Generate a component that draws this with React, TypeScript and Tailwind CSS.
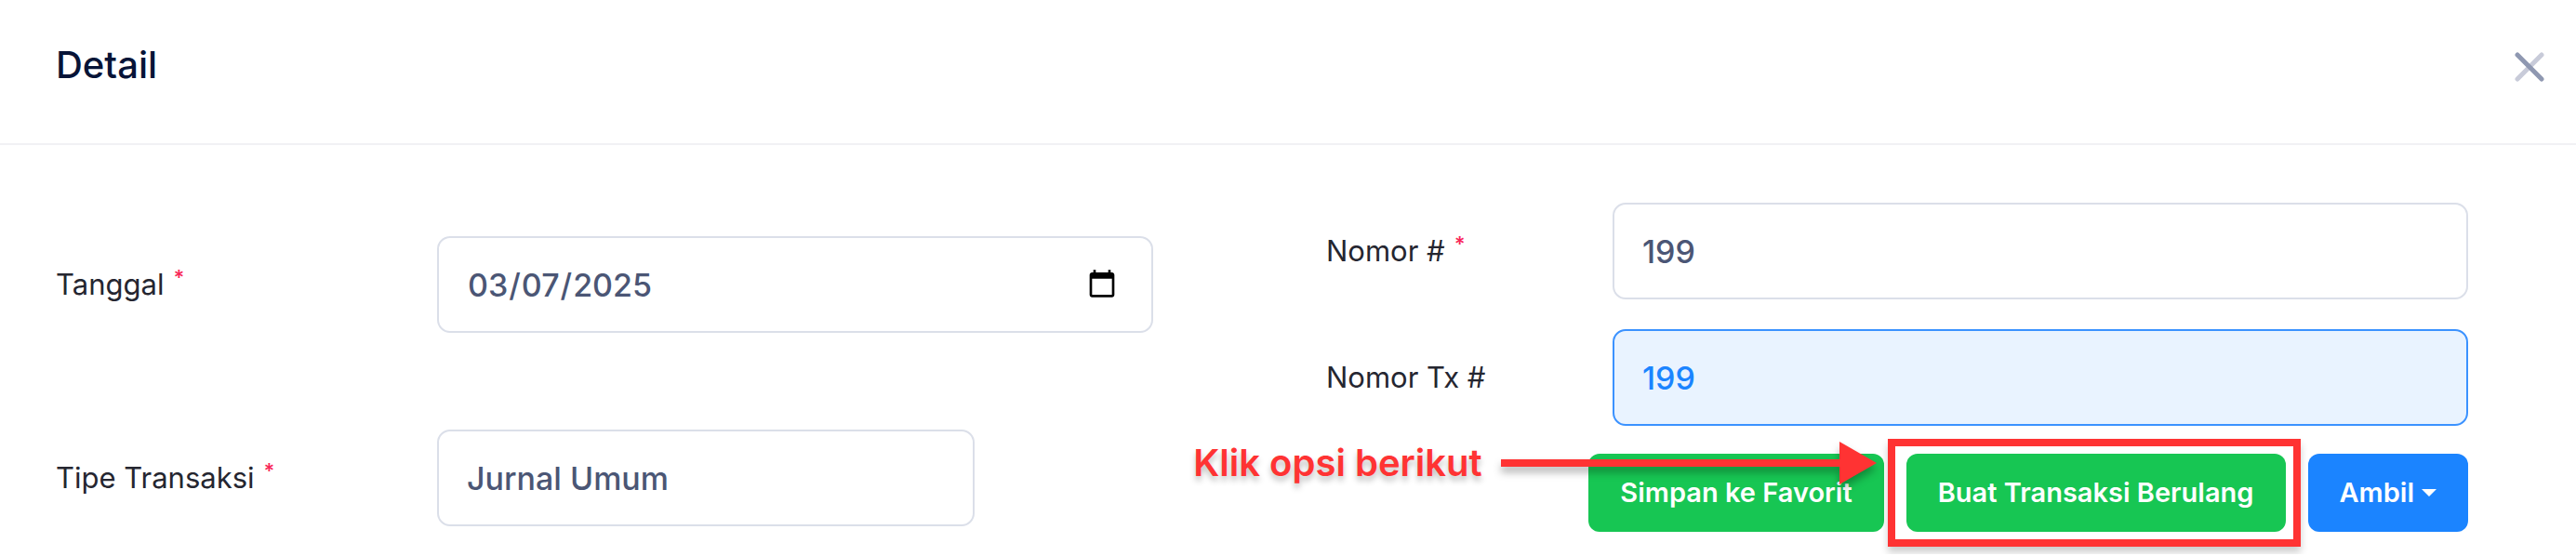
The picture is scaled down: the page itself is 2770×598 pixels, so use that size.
import type { ReactNode } from "react";

const FIELD =
  "h-[104px] w-full rounded-[14px] border-2 pl-[30px] pr-[34px] text-[34px] font-medium outline-none";
const FIELD_DEFAULT = "border-[#dbdfe9] bg-white text-[#4b5675]";
const FIELD_PRIMARY = "border-[#3b92ff] bg-[#e9f3ff] text-[#1b84ff]";

const BUTTON =
  "h-[84px] shrink-0 rounded-xl px-[34px] text-[29px] font-semibold text-white whitespace-nowrap";

function Label({ htmlFor, required, children }: { htmlFor: string; required?: boolean; children: ReactNode }) {
  return (
    <label htmlFor={htmlFor} className="flex items-center gap-2.5 text-[31px] leading-[48px] text-[#252630]">
      {children}
      {required && <span className="self-start text-[22px] leading-[32px] font-semibold text-[#f8285a]">*</span>}
    </label>
  );
}

function CloseIcon() {
  return (
    <svg viewBox="0 0 32 32" className="size-8" fill="none" strokeWidth="5" strokeLinecap="round">
      <path d="M29 3 3 29" stroke="#c8cbd9" />
      <path d="m3 3 26 26" stroke="#8f98b1" />
    </svg>
  );
}

// Red callout that points at the highlighted button
function Callout({ text }: { text: string }) {
  return (
    <div className="pointer-events-none absolute -top-[13px] right-[calc(100%+32px)] flex h-[46px] items-center gap-5 text-[#ff3333]">
      <span className="text-[40px] font-semibold whitespace-nowrap [text-shadow:0_5px_6px_rgb(0_0_0/0.25)]">{text}</span>
      <svg
        viewBox="0 0 404 46"
        className="h-[46px] w-[404px] shrink-0 overflow-visible drop-shadow-[0_6px_4px_rgb(0_0_0/0.3)]"
        fill="currentColor"
      >
        <path d="M0 19h364V0l40 23-40 23V27H0z" />
      </svg>
    </div>
  );
}

export default function App() {
  return (
    <div className="bg-white font-['Inter',sans-serif]">
      <header className="flex h-[156px] items-start justify-between border-b-2 border-[#f1f1f4] pl-[60px] pr-[34px]">
        <h2 className="pt-[46px] text-[40px] leading-[48px] font-medium text-[#071437]">Detail</h2>
        <button type="button" aria-label="Tutup" className="mt-14">
          <CloseIcon />
        </button>
      </header>

      <form className="grid grid-cols-[1180fr_1228fr] gap-x-[186px] pt-[62px] pr-[116px] pb-6 pl-[60px]">
        <div className="grid grid-cols-[410px_1fr] content-start items-center gap-y-[104px] pt-9">
          <Label htmlFor="tanggal" required>Tanggal</Label>
          <input id="tanggal" type="date" defaultValue="2025-03-07" className={`${FIELD} ${FIELD_DEFAULT}`} />

          <Label htmlFor="tipe" required>Tipe Transaksi</Label>
          <div className="w-3/4">
            <input id="tipe" type="text" defaultValue="Jurnal Umum" className={`${FIELD} ${FIELD_DEFAULT}`} />
          </div>
        </div>

        <div className="flex flex-col">
          <div className="grid grid-cols-[308px_1fr] items-center gap-y-8">
            <Label htmlFor="nomor" required>Nomor #</Label>
            <input id="nomor" type="text" defaultValue="199" className={`${FIELD} ${FIELD_DEFAULT}`} />

            <Label htmlFor="nomor-tx">Nomor Tx #</Label>
            <input id="nomor-tx" type="text" defaultValue="199" readOnly className={`${FIELD} ${FIELD_PRIMARY}`} />
          </div>

          <div className="mt-[30px] flex justify-end gap-6">
            <button type="button" className={`${BUTTON} bg-[#17c653]`}>Simpan ke Favorit</button>
            <div className="relative">
              <button type="button" className={`${BUTTON} bg-[#17c653]`}>Buat Transaksi Berulang</button>
              <div className="pointer-events-none absolute -inset-y-4 -right-4 -left-5 border-8 border-[#ff3333] shadow-[0_6px_8px_rgb(0_0_0/0.2)]" />
              <Callout text="Klik opsi berikut" />
            </div>
            <button type="button" className={`${BUTTON} flex items-center gap-2 bg-[#1b84ff]`}>
              Ambil
              <svg viewBox="0 0 16 8" className="h-2 w-4" fill="currentColor">
                <path d="M0 0h16L8 8z" />
              </svg>
            </button>
          </div>
        </div>
      </form>
    </div>
  );
}
